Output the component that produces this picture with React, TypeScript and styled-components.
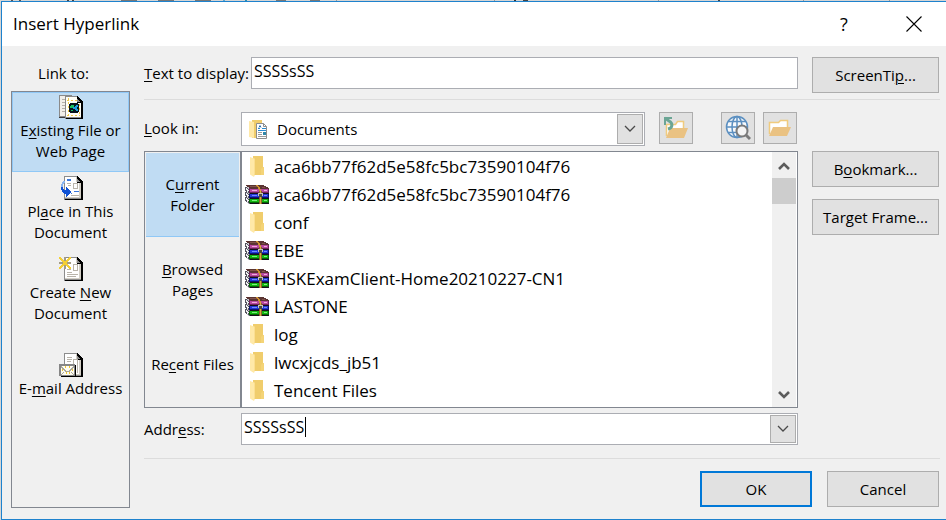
import React, { useState } from "react";
import styled, { createGlobalStyle, css } from "styled-components";

const color = {
  face: "#f0f0f0",
  button: "#e1e1e1",
  buttonEdge: "#adadad",
  fieldEdge: "#abadb3",
  frame: "#828790",
  accent: "#0078d7",
  windowEdge: "#1e82cd",
  selected: "#c0dcf3",
  selectedEdge: "#90c8f6",
  rule: "#dcdcdc",
};

const GlobalStyle = createGlobalStyle`
  *, *::before, *::after { box-sizing: border-box; }
  body {
    margin: 0;
    background: #d5d5d5;
    font-family: "Open Sans", "Noto Sans", sans-serif;
    font-size: 15px;
    line-height: 21px;
    color: #000;
  }
  button, input, select { font: inherit; color: inherit; margin: 0; }
  u { text-underline-offset: 2px; text-decoration-thickness: 1px; }
`;

const Desktop = styled.div`
  min-height: 100vh;
  padding-left: 1px;
  display: flex;
  flex-direction: column;
`;

const BackdropEdge = styled.div`
  height: 1px;
  background: linear-gradient(
    90deg,
    #d5d5d5 10px, #555 10px 12px, #d5d5d5 12px 18px, #555 18px 20px,
    #d5d5d5 20px 66px, #444 66px 68px, #d5d5d5 68px 71px, #444 71px 73px,
    #d5d5d5 73px 120px, #777 120px 136px, #d5d5d5 136px 157px, #777 157px 173px,
    #d5d5d5 173px 194px, #777 194px 210px, #d5d5d5 210px 222px, #5aa7d0 222px 224px,
    #d5d5d5 224px 244px, #2a8fae 244px 246px, #d5d5d5 246px 275px, #777 275px 285px,
    #d5d5d5 285px 309px, #777 309px 319px, #d5d5d5 319px 335px, #999 335px 336px,
    #d5d5d5 336px 493px, #999 493px 494px, #d5d5d5 494px 513px, #333 513px 515px,
    #d5d5d5 515px 522px, #444 522px 527px, #d5d5d5 527px 657px, #999 657px 658px,
    #d5d5d5 658px 717px, #444 717px 719px, #d5d5d5 719px 802px, #999 802px 803px,
    #d5d5d5 803px 888px, #999 888px 889px, #d5d5d5 889px
  );
`;

const Dialog = styled.section`
  flex: 1;
  display: flex;
  flex-direction: column;
  border: 1px solid ${color.windowEdge};
  border-right: 0;
  background: ${color.face};
`;

const TitleBar = styled.header`
  height: 44px;
  padding: 0 7px 0 11px;
  display: flex;
  align-items: center;
  background: #fff;
`;

const Title = styled.h1`
  flex: 1;
  margin: 0;
  font-size: 17px;
  line-height: 24px;
  font-weight: 400;
`;

const CaptionButton = styled.button`
  width: 50px;
  height: 32px;
  margin-left: 20px;
  padding: 0;
  border: 0;
  background: none;
  font-size: 18px;
  display: grid;
  place-items: center;
`;

const Body = styled.div`
  flex: 1;
  display: grid;
  grid-template-columns: 119px minmax(0, 1fr);
  column-gap: 14px;
  padding: 11px 7px 11px 9px;
`;

const LinkTo = styled.nav`
  display: flex;
  flex-direction: column;
`;

const LinkToCaption = styled.div`
  height: 34px;
  padding: 6px 14px 0 0;
  text-align: center;
`;

const LinkToList = styled.div`
  flex: 1;
  display: flex;
  flex-direction: column;
  gap: 1px;
  border: 1px solid ${color.frame};
`;

const LinkToItem = styled.button<{ $selected?: boolean; $single?: boolean }>`
  width: 100%;
  height: 80px;
  padding: ${(p) => (p.$single ? 17 : 2)}px 0 0;
  border: 1px solid transparent;
  background: none;
  display: flex;
  flex-direction: column;
  align-items: center;
  gap: 1px;
  text-align: center;
  ${(p) =>
    p.$selected &&
    css`
      background: ${color.selected};
      border-color: ${color.selectedEdge};
    `}
`;

const Main = styled.main`
  min-width: 0;
`;

const Row = styled.div`
  display: flex;
  align-items: flex-start;
`;

const FileRow = styled(Row)`
  margin: 5px 0;
`;

const Label = styled.label<{ $wide?: boolean }>`
  width: ${(p) => (p.$wide ? 107 : 97)}px;
  flex: none;
  padding-top: 6px;
  white-space: nowrap;
`;

const Rule = styled.hr<{ $above: number }>`
  height: 1px;
  margin: ${(p) => p.$above}px -1px 12px 0;
  border: 0;
  background: ${color.rule};
`;

const TextField = styled.input`
  display: block;
  width: 100%;
  height: 32px;
  padding: 0 2px 5px;
  border: 1px solid ${color.fieldEdge};
  border-radius: 0;
  background: #fff;
  font-size: 16px;
  outline: none;
  caret-color: transparent;
`;

const Field = styled.div`
  position: relative;
  flex: 1;
  min-width: 0;
`;

const Select = styled.select`
  appearance: none;
  display: block;
  width: 100%;
  height: 34px;
  padding: 0 32px 0 35px;
  border: 1px solid ${color.fieldEdge};
  border-radius: 0;
  background: #fff;
`;

const SelectIcon = styled.span`
  position: absolute;
  left: 8px;
  top: 8px;
  display: flex;
  pointer-events: none;
`;

const dropFace = css`
  position: absolute;
  top: 2px;
  right: 2px;
  bottom: 2px;
  width: 26px;
  padding: 0;
  border: 1px solid ${color.buttonEdge};
  background: ${color.button};
  display: grid;
  place-items: center;
`;

const DropFace = styled.span`
  ${dropFace}
  pointer-events: none;
`;

const DropButton = styled.button`
  ${dropFace}
`;

const Caret = styled.span`
  position: absolute;
  left: 64px;
  top: 4px;
  width: 1px;
  height: 20px;
  background: #000;
`;

const IconButtons = styled.div`
  display: flex;
  flex: none;
  gap: 8px;
  padding: 0 1px 0 14px;
`;

const ToolButton = styled.button<{ $apart?: boolean }>`
  width: 34px;
  height: 32px;
  padding: 0;
  margin-right: ${(p) => (p.$apart ? 20 : 0)}px;
  border: 1px solid ${color.buttonEdge};
  background: ${color.button};
  display: grid;
  place-items: center;
`;

const Side = styled.div`
  width: 127px;
  flex: none;
  margin-left: 14px;
  display: flex;
  flex-direction: column;
  gap: 12px;
`;

const PushButton = styled.button<{ $primary?: boolean; $narrow?: boolean }>`
  width: ${(p) => (p.$narrow ? "112px" : "100%")};
  height: 36px;
  padding: 1px 0 0;
  border: ${(p) => (p.$primary ? `2px solid ${color.accent}` : `1px solid ${color.buttonEdge}`)};
  background: ${color.button};
`;

const Browser = styled.div`
  flex: 1;
  min-width: 0;
  display: flex;
  height: 257px;
  border: 1px solid ${color.frame};
`;

const Tabs = styled.div`
  width: 97px;
  flex: none;
  display: grid;
  grid-template-rows: 84px 84px 1fr;
  padding: 1px;
  border-right: 2px solid ${color.frame};
`;

const Tab = styled.button<{ $selected?: boolean }>`
  padding: ${(p) => (p.$selected ? 0 : 3)}px 0 0;
  border: 0;
  border-bottom: 1px solid ${(p) => (p.$selected ? color.selectedEdge : "transparent")};
  background: ${(p) => (p.$selected ? color.selected : "none")};
  white-space: nowrap;
`;

const Files = styled.ul`
  flex: 1;
  min-width: 0;
  margin: 0;
  padding: 0 0 0 3px;
  list-style: none;
  overflow: hidden;
  background: #fff;
`;

const File = styled.li`
  height: 28px;
  display: flex;
  align-items: center;
  gap: 5px;
  font-size: 17px;
  white-space: nowrap;
`;

const FileIcon = styled.span`
  width: 24px;
  flex: none;
  display: flex;
  justify-content: center;
`;

const ScrollBar = styled.div`
  width: 25px;
  flex: none;
  display: flex;
  flex-direction: column;
  border-right: 1px solid #fff;
`;

const ScrollButton = styled.button`
  height: 26px;
  padding: 2px 0 0;
  border: 0;
  background: none;
  display: grid;
  place-items: center;
`;

const ScrollTrack = styled.div`
  flex: 1;
`;

const ScrollThumb = styled.div`
  height: 26px;
  background: #cdcdcd;
`;

const Footer = styled.div`
  display: flex;
  justify-content: flex-end;
  gap: 15px;
`;

const Page = () => (
  <>
    <path d="M5 0h13l6 6v18H5z" fill="#8c8c8c" />
    <path d="M6 1h11v5h5v16H6z" fill="#fff" />
    <path d="M18 0h1v1h1v1h1v1h1v1h1v1h1v19H6v-1h16V7h-4V6h3V5h-1V4h-1V3h-1z" fill="#000" />
    <path d="M17 1h1v5h-1zM20 7h2v15h-2zM6 21h14v1H6z" fill="#d3cfc6" />
  </>
);

const ExistingIcon = () => (
  <svg width="24" height="24" viewBox="0 0 24 24" shapeRendering="crispEdges" aria-hidden="true">
    <path d="M0 0h12l3 3v19H0z" fill="#8a8a8a" />
    <path d="M1 1h11v20H1z" fill="#f1efea" />
    <path d="M0 22h7v1H0z" fill="#3a3a3a" />
    <path d="M3 4h4v1H3zM3 7h3v1H3zM3 10h3v1H3zM3 13h3v1H3zM3 16h3v1H3z" fill="#b5b0a8" />
    <path d="M6 1h12l6 6v17H6z" fill="#8a8a8a" />
    <path d="M7 2h11v5h4v15H7z" fill="#fffef6" />
    <path d="M9 3v18M20 9v12M8 5h10M8 20h13" stroke="#efc94a" strokeWidth="1" strokeDasharray="2 2" fill="none" />
    <path d="M18 1h1v1h1v1h1v1h1v1h1v1h1v18H7v-1h15V8h-4V7h3V6h-1V5h-1V4h-1z" fill="#000" />
    <path d="M11 8h8v1h1v8h-1v1h-8v-1h-1V9h1z" fill="#06141c" />
    <path d="M12 10h3v2h-1v1h-3v-2h1zM12 15h2v1h-2z" fill="#19c060" />
    <path d="M14 12h2v-1h1v-1h2v2h-1v2h1v2h-2v-1h-1v-1h-2z" fill="#1ba0dc" />
  </svg>
);

const PlaceIcon = () => (
  <svg width="24" height="24" viewBox="0 0 24 24" shapeRendering="crispEdges" aria-hidden="true">
    <Page />
    <path d="M8 3h4v2H8zM15 15h5v1h-5zM12 17h1v1h-1z" fill="#3b78dc" />
    <path d="M8 7h4v1H8zM9 9h3v1H9zM14 7h5v1h-5zM14 8h1v4h-1zM18 8h1v4h-1zM14 12h5v1h-5zM12 19h8v1h-8z" fill="#b9b4aa" />
    <path d="M4 5h2v2H5v1H4v4H2V8h1V6h1z" fill="#8ab6f0" />
    <path d="M2 11h2v2h1v1h2v-3h1v1h1v1h1v1h1v1h1v2h-1v1h-1v1H9v1H8v1H7v-3H5v-1H4v-1H3v-2H2z" fill="#0f52d4" />
  </svg>
);

const CreateIcon = () => (
  <svg width="24" height="24" viewBox="0 0 24 24" shapeRendering="crispEdges" aria-hidden="true">
    <Page />
    <path d="M8 12h4v1H8zM8 15h5v1H8zM8 17h11v1H8zM8 19h9v1H8zM14 7h5v1h-5zM14 8h1v5h-1zM18 8h1v5h-1zM14 13h5v1h-5z" fill="#b9b4aa" />
    <path d="M5 0h2v4H5zM5 8h2v4H5zM0 5h4v2H0zM8 5h4v2H8z" fill="#a39c86" />
    <path d="M0 0h2v1h1v1h1v1h1v1h2V3h1V2h1V1h1V0h2v2h-1v1h-1v1H9v1H8v2h1v1h1v1h1v1h1v2h-2v-1H9v-1H8V9H7V8H5v1H4v1H3v1H2v1H0v-2h1V9h1V8h1V7h1V5H3V4H2V3H1V2H0z" fill="#f4cf35" />
  </svg>
);

const MailIcon = () => (
  <svg width="24" height="24" viewBox="0 0 24 24" shapeRendering="crispEdges" aria-hidden="true">
    <Page />
    <path d="M8 4h5v1H8zM8 6h5v1H8zM8 8h4v1H8zM14 6h1v14h-1zM18 6h1v14h-1zM14 6h5v1h-5z" fill="#b9b4aa" />
    <path d="M16 12h1v11h-1zM2 23h15v1H2z" fill="#000" />
    <path d="M0 11h16v12H0z" fill="#868686" />
    <path d="M2 13h13v9H2z" fill="#fffdf0" />
    <path d="M2 13h1v1h1v1h1v1h1v1h1v1h3v-1h1v-1h1v-1h1v-1h1v-1h1v2h-1v1h-1v1h-1v1h-1v1H6v-1H5v-1H4v-1H3v-1H2zM2 21h1v-1h1v-1h1v1H4v1H3v1H2zM14 21h-1v-1h-1v-1h1v1h1v1h1v1h-1z" fill="#a9a79e" />
    <path d="M6 13h1v2H6zM10 13h1v2h-1zM3 16h1v2H3zM13 16h1v2h-1zM7 19h1v2H7zM10 19h1v2h-1z" fill="#efc530" />
  </svg>
);

const FolderShape = () => (
  <>
    <path d="M3 0h10v11h1v8H3z" fill="#f4d478" />
    <path d="M3 0h10v11l-2 2v6H4z" fill="#f0cd6c" />
    <path d="M0 1l4 1.500V21l-4-2.500z" fill="#ffe9a8" />
    <path d="M4 3l1-1v16l-1 3z" fill="#fbdf92" />
  </>
);

const FolderIcon = () => (
  <svg width="14" height="21" viewBox="0 0 14 21" aria-hidden="true">
    <FolderShape />
  </svg>
);

const DocumentsIcon = () => (
  <svg width="18" height="20" viewBox="0 0 18 20" aria-hidden="true">
    <path d="M3 0h10v18H3z" fill="#f0cd6c" />
    <path d="M0 1l5 1v16l-5-1z" fill="#ffe9a8" />
    <path d="M7.500 3.500h7l3 3v12h-10z" fill="#fff" stroke="#8d8d8d" />
    <path d="M14.500 3.500v3h3" fill="none" stroke="#8d8d8d" />
    <path d="M9 8.500h2M9 10.500h8M13 8.500h4" stroke="#2b8bd0" />
    <path d="M10 7.500l1-2 1 2" fill="none" stroke="#2b6fb0" />
    <path d="M9 12.500h4M9 14.500h4M9 16.500h8" stroke="#9a9a9a" />
    <path d="M14 12h3v3h-3z" fill="#2f86a8" />
  </svg>
);

const Book = ({ y, fill, light, dark }: { y: number; fill: string; light: string; dark: string }) => (
  <g transform={`translate(0 ${y})`}>
    <path d="M0 0h4v7H3V6H2V5H1V4H0z" fill="#c4c4ce" />
    <path d="M0 0h2v1h1v1h1v1h2v4H4V6H3V5H1V4H0z" fill="#55555f" />
    <path d="M1 1h1v1h1v1h1v1h1v1H4V4H2V3H1zM2 4h1v1h2v1H4V5H2z" fill="#f0f0f4" />
    <path d="M4 1h19v1h1v5H5V6H4z" fill={dark} />
    <path d="M5 2h18v3H5z" fill={fill} />
    <path d="M7 3h5v1H7zM19 3h3v1h-3z" fill={light} />
    <path d="M5 6h19v1H5z" fill="#14101c" />
  </g>
);

const ArchiveIcon = () => (
  <svg width="24" height="19" viewBox="0 0 24 19" shapeRendering="crispEdges" aria-hidden="true">
    <Book y={12} fill="#12b812" light="#7dee7d" dark="#056405" />
    <Book y={7} fill="#2438d8" light="#6f8cff" dark="#0a1470" />
    <Book y={2} fill="#b84aa0" light="#f0a8de" dark="#6d2259" />
    <path d="M1 0h18v1h2v1h2v1h1v1H6V3H4V2H2V1H1z" fill="#5a3432" />
    <path d="M5 1h8v1H5zM17 2h3v1h-3z" fill="#81524a" />
    <path d="M11 0h2v1h1v1h1v2h1v2h-2V4h-1V2h-1V1h-1z" fill="#cf9230" />
    <path d="M14 6h3v13h-3z" fill="#8c6424" />
    <path d="M15 5h1v14h-1z" fill="#d9a845" />
    <path d="M13 8h5v3h-5z" fill="#c5c5bc" />
    <path d="M14 9h3v3h-3z" fill="#4a4a42" />
  </svg>
);

const OpenFolderIcon = () => (
  <svg width="24" height="20" viewBox="0 0 24 20" aria-hidden="true">
    <path d="M1.500 16V4.500h9l2-2h7v7" fill="#fff" stroke="#f0cb7e" strokeWidth="1.500" />
    <path d="M5 9h18l-4 9H1z" fill="#eac282" />
  </svg>
);

const UpFolderIcon = () => (
  <svg width="24" height="24" viewBox="0 0 24 24" aria-hidden="true">
    <path d="M2.500 20V8.500h9l2-3h6v8" fill="#fff" stroke="#f0cb7e" strokeWidth="1.500" />
    <path d="M6 12h18l-4 10H2z" fill="#eac282" />
    <path d="M1 9V2h7" fill="none" stroke="#6ba594" strokeWidth="2" />
    <path d="M1 2l4 3c4 2 4 7-1 8" fill="none" stroke="#6ba594" strokeWidth="3" />
  </svg>
);

const WebIcon = () => (
  <svg width="26" height="26" viewBox="0 0 26 26" aria-hidden="true">
    <circle cx="12" cy="12" r="10.500" fill="#f6f9fc" />
    <g fill="none" stroke="#5b8fc0" strokeWidth="1.500">
      <circle cx="12" cy="12" r="10.500" />
      <ellipse cx="12" cy="12" rx="5" ry="10.500" />
      <path d="M12 1.500v21M1.500 12h21M3 6.500h18M3 17.500h18" />
    </g>
    <circle cx="17" cy="16" r="5.500" fill="#f4f4f4" stroke="#7a7a7a" strokeWidth="2" />
    <path d="M21 20l4 4" stroke="#7a7a7a" strokeWidth="3" />
  </svg>
);

const ThinChevron = () => (
  <svg width="12" height="8" viewBox="0 0 12 8" aria-hidden="true">
    <path d="M1 1l5 5 5-5" fill="none" stroke="#4a4a4a" strokeWidth="1.300" />
  </svg>
);

const ThickChevron = ({ up }: { up?: boolean }) => (
  <svg width="12" height="10" viewBox="0 0 12 10" aria-hidden="true">
    <path d={up ? "M1 8l5-5 5 5" : "M1 2l5 5 5-5"} fill="none" stroke="#5c5c5c" strokeWidth="2.600" />
  </svg>
);

const CloseIcon = () => (
  <svg width="16" height="16" viewBox="0 0 16 16" aria-hidden="true">
    <path d="M.5.5l15 15M15.500.5l-15 15" stroke="#000" strokeWidth="1.100" />
  </svg>
);

const files: { name: string; archive?: boolean }[] = [
  { name: "aca6bb77f62d5e58fc5bc73590104f76" },
  { name: "aca6bb77f62d5e58fc5bc73590104f76", archive: true },
  { name: "conf" },
  { name: "EBE", archive: true },
  { name: "HSKExamClient-Home20210227-CN1", archive: true },
  { name: "LASTONE", archive: true },
  { name: "log" },
  { name: "lwcxjcds_jb51" },
  { name: "Tencent Files" },
];

export default function App() {
  const [text, setText] = useState("SSSSsSS");
  const [address, setAddress] = useState("SSSSsSS");

  return (
    <Desktop>
      <GlobalStyle />
      <BackdropEdge />
      <Dialog role="dialog" aria-labelledby="dialog-title">
        <TitleBar>
          <Title id="dialog-title">Insert Hyperlink</Title>
          <CaptionButton aria-label="Help">?</CaptionButton>
          <CaptionButton aria-label="Close">
            <CloseIcon />
          </CaptionButton>
        </TitleBar>
        <Body>
          <LinkTo aria-label="Link to">
            <LinkToCaption>Link to:</LinkToCaption>
            <LinkToList>
              <LinkToItem $selected aria-pressed="true">
                <ExistingIcon />
                <span>E<u>x</u>isting File or<br />Web Page</span>
              </LinkToItem>
              <LinkToItem>
                <PlaceIcon />
                <span>Pl<u>a</u>ce in This<br />Document</span>
              </LinkToItem>
              <LinkToItem>
                <CreateIcon />
                <span>Create <u>N</u>ew<br />Document</span>
              </LinkToItem>
              <LinkToItem $single>
                <MailIcon />
                <span>E-<u>m</u>ail Address</span>
              </LinkToItem>
            </LinkToList>
          </LinkTo>
          <Main>
            <Row>
              <Label $wide htmlFor="display"><u>T</u>ext to display:</Label>
              <Field>
                <TextField id="display" value={text} onChange={(e) => setText(e.target.value)} />
              </Field>
              <Side>
                <PushButton>ScreenTi<u>p</u>...</PushButton>
              </Side>
            </Row>
            <Rule $above={6} />
            <Row>
              <Label htmlFor="look-in"><u>L</u>ook in:</Label>
              <Field>
                <Select id="look-in" defaultValue="Documents">
                  <option>Documents</option>
                </Select>
                <SelectIcon><DocumentsIcon /></SelectIcon>
                <DropFace><ThinChevron /></DropFace>
              </Field>
              <IconButtons>
                <ToolButton $apart aria-label="Up one folder"><UpFolderIcon /></ToolButton>
                <ToolButton aria-label="Browse the Web"><WebIcon /></ToolButton>
                <ToolButton aria-label="Browse for file"><OpenFolderIcon /></ToolButton>
              </IconButtons>
              <Side />
            </Row>
            <FileRow>
              <Browser>
                <Tabs>
                  <Tab $selected aria-pressed="true">C<u>u</u>rrent<br />Folder</Tab>
                  <Tab><u>B</u>rowsed<br />Pages</Tab>
                  <Tab>Re<u>c</u>ent Files</Tab>
                </Tabs>
                <Files>
                  {files.map((file, i) => (
                    <File key={i}>
                      <FileIcon>{file.archive ? <ArchiveIcon /> : <FolderIcon />}</FileIcon>
                      {file.name}
                    </File>
                  ))}
                </Files>
                <ScrollBar>
                  <ScrollButton aria-label="Scroll up"><ThickChevron up /></ScrollButton>
                  <ScrollTrack><ScrollThumb /></ScrollTrack>
                  <ScrollButton aria-label="Scroll down"><ThickChevron /></ScrollButton>
                </ScrollBar>
              </Browser>
              <Side>
                <PushButton>B<u>o</u>okmark...</PushButton>
                <PushButton>Tar<u>g</u>et Frame...</PushButton>
              </Side>
            </FileRow>
            <Row>
              <Label htmlFor="address">Addr<u>e</u>ss:</Label>
              <Field>
                <TextField id="address" value={address} onChange={(e) => setAddress(e.target.value)} />
                <Caret />
                <DropButton aria-label="Show addresses"><ThinChevron /></DropButton>
              </Field>
              <Side />
            </Row>
            <Rule $above={13} />
            <Footer>
              <PushButton $narrow $primary>OK</PushButton>
              <PushButton $narrow>Cancel</PushButton>
            </Footer>
          </Main>
        </Body>
      </Dialog>
    </Desktop>
  );
}
